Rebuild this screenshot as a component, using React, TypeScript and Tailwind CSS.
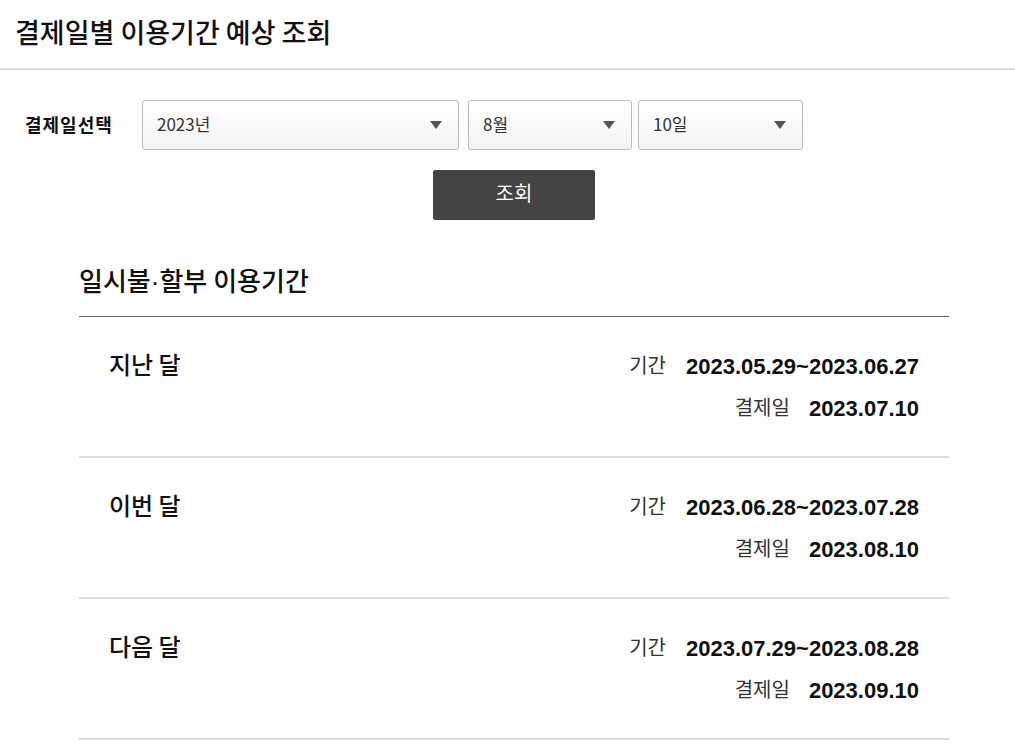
const font = { fontFamily: '"Noto Sans CJK KR", "Noto Sans", sans-serif' };
const latin = { fontFamily: '"Liberation Sans", Arial, sans-serif' };

const periods = [
  { name: "지난 달", range: "2023.05.29~2023.06.27", pay: "2023.07.10" },
  { name: "이번 달", range: "2023.06.28~2023.07.28", pay: "2023.08.10" },
  { name: "다음 달", range: "2023.07.29~2023.08.28", pay: "2023.09.10" },
];

const Select = ({ value, width }: { value: string; width: string }) => (
  <div
    className={`${width} h-[50px] flex items-center justify-between pl-[14px] pr-[16px] border border-[#bbb] rounded-[3px] bg-gradient-to-b from-white to-[#f3f3f3] text-[17px] text-[#333]`}
  >
    <span className="-mt-[2px]">{value}</span>
    <span className="w-0 h-0 border-l-[6px] border-r-[6px] border-t-[8px] border-l-transparent border-r-transparent border-t-[#555]" />
  </div>
);

const App = () => {
  return (
    <div className="w-[1015px] min-h-[755px] bg-white text-[#111]" style={font}>
      {/* Header */}
      <div className="h-[70px] px-[15px] flex items-center border-b-2 border-[#ddd]">
        <h1 className="text-[27px] font-medium text-[#111] -mt-[4px]">결제일별 이용기간 예상 조회</h1>
      </div>

      {/* Form */}
      <div className="pt-[30px] pl-[25px] flex items-center">
        <span className="w-[117px] text-[18px] tracking-[1px] font-bold text-[#111] -mt-[2px]">결제일선택</span>
        <Select value="2023년" width="w-[317px]" />
        <div className="w-[9px]" />
        <Select value="8월" width="w-[164px]" />
        <div className="w-[6px]" />
        <Select value="10일" width="w-[165px]" />
      </div>

      <div className="ml-[79px] w-[870px]">
        <div className="pt-[20px] flex justify-center">
          <button className="w-[162px] h-[50px] bg-[#444] text-white text-[20px] rounded-[2px]">
            <span className="relative -top-[2px]">조회</span>
          </button>
        </div>

        <h2 className="mt-[43px] text-[26px] font-medium leading-[34px] text-[#111]">
          일시불<span style={latin}>·</span>할부 이용기간
        </h2>
        <div className="mt-[17px] border-t border-[#666]" />

        {periods.map((p) => (
          <div
            key={p.name}
            className="px-[30px] pt-[34px] pb-[33px] flex justify-between items-start border-b-2 border-[#ddd]"
          >
            <span className="text-[24px] font-medium leading-[26px] text-[#111]">{p.name}</span>
            <div className="flex flex-col gap-[12px]">
              <div className="flex justify-end items-center h-[30px]">
                <span className="text-[20px] text-[#333] mr-[20px] -mt-[2px]">기간</span>
                <span className="text-[22px] font-bold text-[#111]" style={latin}>
                  {p.range}
                </span>
              </div>
              <div className="flex justify-end items-center h-[30px]">
                <span className="text-[20px] text-[#333] mr-[19px] -mt-[2px]">결제일</span>
                <span className="text-[22px] font-bold text-[#111]" style={latin}>
                  {p.pay}
                </span>
              </div>
            </div>
          </div>
        ))}
      </div>
    </div>
  );
};

export default App;
